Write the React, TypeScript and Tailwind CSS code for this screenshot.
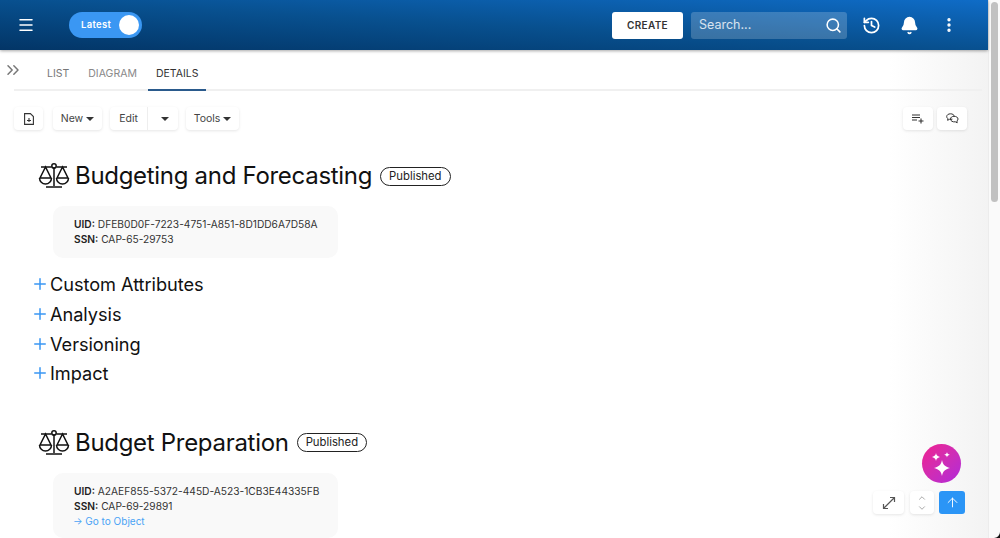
import { ArrowUp, Bell, ChevronDown, ChevronUp, ChevronsRight, EllipsisVertical, History, Menu, Plus, Search } from 'lucide-react'

function Scale() {
  return (
    <svg width="32" height="26" viewBox="0 0 32 26" fill="none" stroke="#111" strokeWidth="1.5" className="shrink-0">
      <path d="M16 4v19M8 24h16M3 4h10.500M18.500 4H29" />
      <circle cx="16" cy="3" r="2.200" />
      <path d="M7.500 4 2 15h11zM24.500 4 19 15h11z" />
      <path d="M1.500 15a6 6 0 0 0 12 0M18.500 15a6 6 0 0 0 12 0" />
    </svg>
  )
}

function Caret() {
  return <span className="ml-[3px] inline-block border-x-[4px] border-t-[4px] border-x-transparent border-t-[#333] align-middle" />
}

function ToolButton({ className, children }: { className: string; children: React.ReactNode }) {
  return (
    <div className={`flex h-[23px] items-center justify-center rounded-[4px] bg-white text-[10.500px] text-[#444] shadow-[0_1px_3px_rgba(0,0,0,0.1)] ${className}`}>
      {children}
    </div>
  )
}

function Section({ title, uid, ssn, link }: { title: string; uid: string; ssn: string; link?: boolean }) {
  return (
    <section>
      <div className="ml-[38px] flex h-[32px] items-center">
        <Scale />
        <h2 className="ml-[5px] text-[24px] leading-[32px] tracking-[-0.3px] text-[#111]">{title}</h2>
        <span className="ml-[8px] rounded-full border border-[#222] px-[8px] text-[11.300px] leading-[17px] text-[#222]">Published</span>
      </div>
      <div className={`ml-[53px] mt-[14px] w-[285px] rounded-[10px] bg-[#f9f9f9] pl-[21px] pt-[11px] text-[10.200px] leading-[15px] text-[#333] ${link ? 'h-[65px]' : 'h-[52px]'}`}>
        <div><b className="font-semibold text-[#222]">UID:</b> {uid}</div>
        <div><b className="font-semibold text-[#222]">SSN:</b> {ssn}</div>
        {link && <div className="-ml-[1px] text-[10px] text-[#4aa3f5]">→ Go to Object</div>}
      </div>
    </section>
  )
}

export default function App() {
  return (
    <div className="relative flex h-[538px] w-[1000px] overflow-hidden bg-white font-['Inter',sans-serif]">
      <div className="flex w-[988px] flex-col">
        <header className="z-10 flex h-[50px] shrink-0 items-center bg-gradient-to-tr from-[#033566] via-[#08508f] to-[#0f6cc7] shadow-[0_1px_3px_rgba(0,0,0,0.35)]">
          <Menu size={18} strokeWidth={2} className="ml-[17px] text-white" />
          <div className="ml-[34px] flex h-[26px] w-[73px] items-center justify-between rounded-full bg-[#3a97f3] pl-[12px] pr-[3px] text-[9.500px] font-semibold tracking-[0.3px] text-white">
            Latest
            <span className="h-[20px] w-[20px] rounded-full bg-white" />
          </div>
          <div className="ml-auto flex h-[27px] w-[71px] items-center justify-center rounded-[3px] bg-white text-[10px] font-semibold tracking-[0.3px] text-[#333]">CREATE</div>
          <div className="ml-[8px] flex h-[27px] w-[156px] items-center justify-between rounded-[3px] bg-white/20 pl-[8px] pr-[5px] text-[12.500px] text-white/80">
            Search...
            <Search size={17} strokeWidth={2.200} className="text-white" />
          </div>
          <History size={19} strokeWidth={2.200} className="ml-[15px] text-white" />
          <Bell size={19} fill="white" strokeWidth={2} className="ml-[19px] text-white" />
          <EllipsisVertical size={18} strokeWidth={2.500} className="ml-[21px] mr-[30px] text-white" />
        </header>

        <main className="flex-1 bg-gradient-to-r from-white from-90% to-[#f3f3f3]">
          <div className="relative ml-[14px] mr-[6px] flex h-[41px] border-b-2 border-[#f0f0f0] text-[10.500px]">
            <ChevronsRight size={20} strokeWidth={1.800} className="absolute -left-[11px] top-[10px] text-[#777]" />
            <span className="ml-[33px] pt-[16px] text-[#777]">LIST</span>
            <span className="ml-[19px] pt-[16px] text-[#888]">DIAGRAM</span>
            <span className="ml-[11px] -mb-[2px] border-b-2 border-[#2a5a8c] px-[8px] pt-[16px] text-[#333]">DETAILS</span>
          </div>

          <div className="ml-[14px] mr-[21px] mt-[16px] flex items-center">
            <ToolButton className="w-[29px]">
              <svg width="10" height="12" viewBox="0 0 10 12" fill="none" stroke="#333" strokeWidth="1.100">
                <path d="M.600.600h5.800L9.400 3.600v7.800H.600z" />
                <path d="M5 5v4M3 7.500h4" />
              </svg>
            </ToolButton>
            <ToolButton className="ml-[10px] w-[49px]">New<Caret /></ToolButton>
            <ToolButton className="ml-[8px] w-[68px]">
              <span className="flex h-full w-[38px] items-center justify-center border-r border-[#eee]">Edit</span>
              <span className="flex w-[30px] justify-center"><Caret /></span>
            </ToolButton>
            <ToolButton className="ml-[8px] w-[53px]">Tools<Caret /></ToolButton>
            <ToolButton className="ml-auto w-[30px]">
              <svg width="12" height="10" viewBox="0 0 12 10" fill="none" stroke="#333" strokeWidth="1.100">
                <path d="M0 1h8M0 3.500h8M0 6h5M9 4.500v5M6.500 7h5" />
              </svg>
            </ToolButton>
            <ToolButton className="ml-[4px] w-[30px]">
              <svg width="13" height="11" viewBox="0 0 13 11" fill="none" stroke="#333" strokeWidth="1">
                <path d="M4.500.8C2.300.8.700 2 .700 3.600c0 .9.500 1.600 1.200 2.100L1.600 7.300 3.500 6.300c1 .2 2 .1 2.900-.2" />
                <path d="M4.500.8c2 0 3.600 1 3.800 2.500" />
                <path d="M8 3.300c2.300 0 4 1.100 4 2.700 0 .8-.4 1.500-1.100 2l.3 1.800-1.900-1c-2.400.4-4.800-.7-4.800-2.800 0-1.600 1.500-2.700 3.500-2.700z" />
              </svg>
            </ToolButton>
          </div>

          <div className="mt-[30px]">
            <Section title="Budgeting and Forecasting" uid="DFEB0D0F-7223-4751-A851-8D1DD6A7D58A" ssn="CAP-65-29753" />
            <div className="ml-[31px] mt-[12px]">
              {['Custom Attributes', 'Analysis', 'Versioning', 'Impact'].map(label => (
                <div key={label} className="flex h-[29.700px] items-center text-[18.200px] tracking-[-0.05px] text-[#111]">
                  <Plus size={18} strokeWidth={2} className="-mt-[1px] text-[#3a97f3]" />
                  <span className="ml-[1px]">{label}</span>
                </div>
              ))}
            </div>
            <div className="mt-[38px]">
              <Section title="Budget Preparation" uid="A2AEF855-5372-445D-A523-1CB3E44335FB" ssn="CAP-69-29891" link />
            </div>
          </div>
        </main>
      </div>

      <div className="w-[12px] border-l border-[#ececec] bg-[#fafafa] pl-[2px] pt-[2px]">
        <div className="h-[200px] w-[7px] rounded-full bg-[#c1c1c1]" />
      </div>

      <div className="absolute left-[922px] top-[444px] flex h-[39px] w-[39px] items-center justify-center rounded-full bg-gradient-to-br from-[#f01b8e] to-[#b126d9]">
        <svg width="24" height="26" viewBox="0 0 24 26" fill="white">
          <path d="M12 9c.9 4.600 2.800 6.500 8 8-5.200 1.500-7.100 3.400-8 8-.9-4.600-2.800-6.500-8-8 5.200-1.500 7.100-3.400 8-8z" />
          <path d="M6 2c.4 2.200 1.300 3.200 4 4-2.700.8-3.600 1.800-4 4-.4-2.200-1.300-3.200-4-4 2.700-.8 3.600-1.800 4-4z" />
          <path d="M17 1c.3 1.500.8 2.200 2.800 2.800-2 .6-2.500 1.300-2.800 2.800-.3-1.500-.8-2.200-2.800-2.800 2-.6 2.500-1.300 2.800-2.800z" />
        </svg>
      </div>
      <div className="absolute left-[873px] top-[491px] flex gap-[6px]">
        <ToolButton className="w-[31px]">
          <svg width="14" height="14" viewBox="0 0 14 14" fill="none" stroke="#555" strokeWidth="1.200">
            <path d="M1.500 12.500l11-11M8 1.500h4.500V6M1.500 8v4.500H6" />
          </svg>
        </ToolButton>
        <ToolButton className="w-[24px] flex-col">
          <ChevronUp size={10} className="text-[#999]" />
          <ChevronDown size={10} className="text-[#999]" />
        </ToolButton>
        <div className="-ml-[1px] flex h-[23px] w-[26px] items-center justify-center rounded-[3px] bg-[#2b95f6]">
          <ArrowUp size={15} strokeWidth={1.500} className="text-white" />
        </div>
      </div>

      {/* window corner */}
      <svg width="6" height="6" viewBox="0 0 6 6" className="absolute bottom-0 right-0">
        <path d="M6 0v6H0a6 6 0 0 0 6-6z" fill="#111" />
      </svg>
    </div>
  )
}
